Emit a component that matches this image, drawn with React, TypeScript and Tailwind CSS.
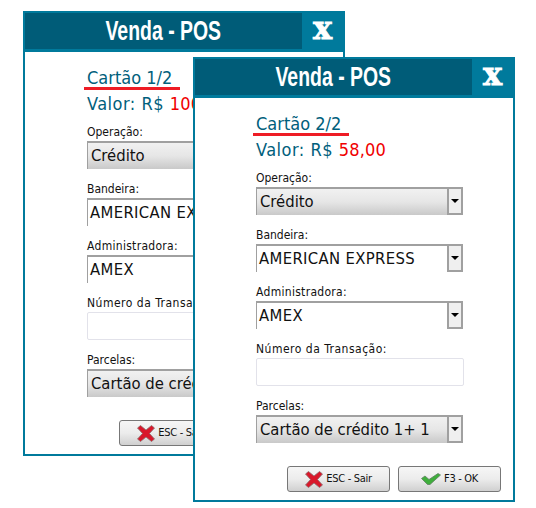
import React from "react";

const uiFont = "font-['DejaVu_Sans_Condensed','DejaVu_Sans',sans-serif]";

const Select: React.FC<{ value: string; shaded?: boolean }> = ({ value, shaded }) => (
  <div className="flex h-[28px] w-[207px]">
    <div
      className={
        "flex-1 overflow-hidden border-t-2 border-l border-[#a0a0a0] text-[16.5px] leading-[26px] whitespace-nowrap text-[#111] " +
        (shaded
          ? "bg-linear-to-b from-[#f1f1f1] via-[#e6e6e6] to-[#c9c9c9] pl-[3px]"
          : "bg-white pl-[2px] tracking-[0.35px]")
      }
    >
      {value}
    </div>
    <div className="flex w-[16px] items-center justify-center border-2 border-[#a0a0a0] bg-[#efefef]">
      <div className="h-0 w-0 border-x-[4px] border-t-[4px] border-x-transparent border-t-black" />
    </div>
  </div>
);

const Field: React.FC<{ label: string; spacing?: string; children: React.ReactNode }> = ({
  label,
  spacing = "",
  children,
}) => (
  <div className="flex flex-col">
    <div className={"h-[20px] text-[12px] leading-[22px] text-[#111] " + spacing}>{label}</div>
    {children}
  </div>
);

const IconX = () => (
  <svg width="18" height="17" viewBox="0 0 18 17">
    <path
      d="M0.5 3 L3.5 0.5 L9 5 L14.5 0.5 L17.5 3 L12.5 8.5 L17.5 14 L14.5 16.5 L9 12 L3.5 16.5 L0.5 14 L5.5 8.5 Z"
      fill="#d9182b"
      stroke="#8a7070"
      strokeWidth="0.8"
      strokeLinejoin="round"
    />
  </svg>
);

const IconCheck = () => (
  <svg width="20" height="12" viewBox="0 0 20 12">
    <path
      d="M0.5 5.5 L4 3 L8 6.5 L17 0.5 L19.5 2 L9 11.5 L6.5 11.5 Z"
      fill="#3fae3c"
      stroke="#5f7f62"
      strokeWidth="0.8"
      strokeLinejoin="round"
    />
  </svg>
);

const Button: React.FC<{ icon: React.ReactNode; label: string }> = ({ icon, label }) => (
  <button className="flex h-[26px] w-[103px] items-center justify-center gap-[3px] rounded-[3px] border border-[#777] bg-linear-to-b from-[#f6f6f6] via-[#ececec] to-[#d0d0d0] text-[11px] tracking-[-0.3px] text-[#111]">
    {icon}
    <span>{label}</span>
  </button>
);

const Window: React.FC<{
  pos: string;
  card: string;
  amount: string;
  pad: string;
  footerPad: string;
}> = ({ pos, card, amount, pad, footerPad }) => (
  <div className={"absolute flex h-[445px] w-[322px] flex-col border-2 border-[#007a9c] bg-white " + pos}>
    {/* Title bar */}
    <div className="flex h-[39px] shrink-0 border-b-[3px] border-[#007a9c] bg-[#007a9c]">
      <div className="flex w-[277px] items-center justify-center bg-[#005c78] font-['Liberation_Sans',sans-serif] text-white">
        <span className="inline-block scale-x-[0.72] text-[27px] leading-[34px] font-bold whitespace-nowrap">
          Venda - POS
        </span>
      </div>
      <div className="flex flex-1 items-start justify-center font-['DejaVu_Serif',serif] text-[32px] leading-[30px] font-bold text-white [-webkit-text-stroke:0.8px_white]">
        x
      </div>
    </div>

    <div className={"flex flex-1 flex-col pt-[14px] " + pad}>
      <div className="relative h-[27px] w-fit text-[18px] leading-[24px] text-[#00607c]">
        {card}
        <div className="absolute top-[21px] left-[-3px] h-[3px] w-[96px] bg-[#ee1c25]" />
      </div>
      <div className="h-[28px] text-[18px] leading-[22px] tracking-[0.5px] text-[#00607c]">
        Valor: R$ <span className="tracking-[0.2px] text-[#f00000]">{amount}</span>
      </div>
      <div className="flex flex-col gap-[9px]">
        <Field label="Operação:">
          <Select value="Crédito" shaded />
        </Field>
        <Field label="Bandeira:">
          <Select value="AMERICAN EXPRESS" />
        </Field>
        <Field label="Administradora:" spacing="tracking-[0.3px]">
          <Select value="AMEX" />
        </Field>
        <Field label="Número da Transação:" spacing="tracking-[0.5px]">
          <div className="h-[28px] w-[208px] rounded-[2px] border border-[#e2e2ea] bg-white" />
        </Field>
        <Field label="Parcelas:">
          <Select value="Cartão de crédito 1+ 1" shaded />
        </Field>
      </div>
      <div className={"mt-[23px] flex gap-[8px] " + footerPad}>
        <Button icon={<IconX />} label="ESC - Sair" />
        <Button icon={<IconCheck />} label="F3 - OK" />
      </div>
    </div>
  </div>
);

export default function App() {
  return (
    <div className={"relative h-[508px] w-[536px] overflow-hidden bg-white " + uiFont}>
      <Window pos="top-[11px] left-[23px]" card="Cartão 1/2" amount="100,00" pad="pl-[62px]" footerPad="ml-[32px]" />
      <Window pos="top-[57px] left-[193px]" card="Cartão 2/2" amount="58,00" pad="pl-[61px]" footerPad="ml-[31px]" />
    </div>
  );
}
